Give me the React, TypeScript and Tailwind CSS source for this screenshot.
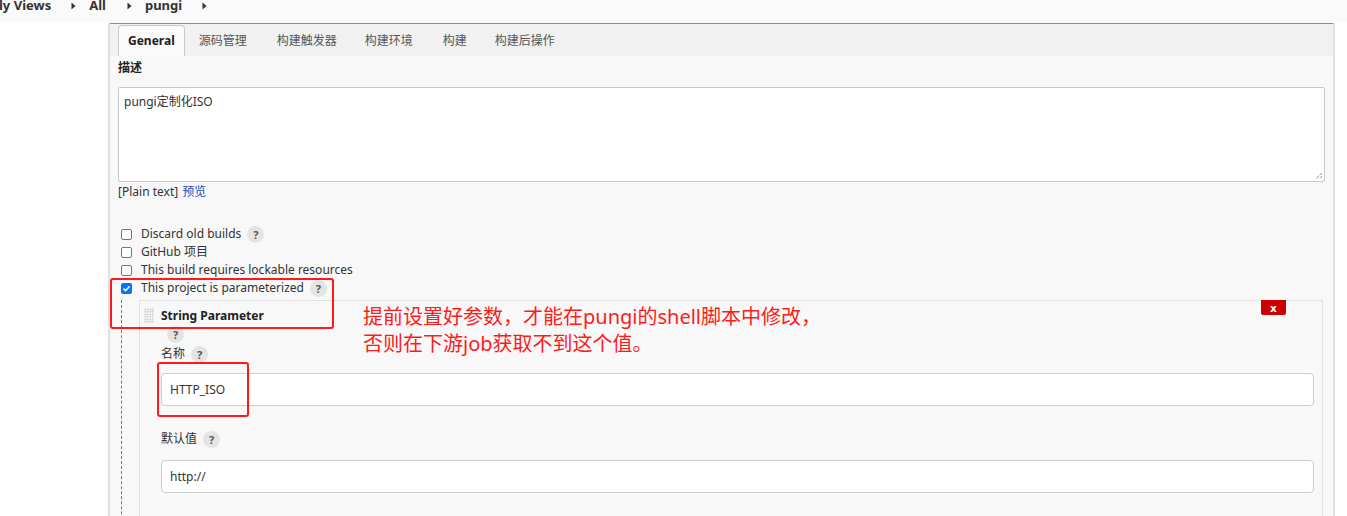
import React from "react";

const FONT = { fontFamily: '"Noto Sans", "Noto Sans CJK SC", sans-serif' } as const;

function Help({ className = "" }: { className?: string }) {
  return (
    <span
      className={
        "inline-flex items-center justify-center w-[17px] h-[17px] rounded-full bg-[#e4e4e4] text-[#555] text-[11px] font-bold leading-none " +
        className
      }
    >
      ?
    </span>
  );
}

function Box({ checked = false }: { checked?: boolean }) {
  if (checked) {
    return (
      <span className="inline-flex items-center justify-center w-[11px] h-[11px] rounded-[2px] bg-[#0075ff]">
        <svg width="9" height="9" viewBox="0 0 9 9">
          <path d="M1.5 4.6 L3.6 6.7 L7.6 2.2" stroke="white" strokeWidth="1.6" fill="none" />
        </svg>
      </span>
    );
  }
  return <span className="inline-block w-[11px] h-[11px] rounded-[2px] border border-[#767676] bg-white" />;
}

function Arrow() {
  return (
    <svg width="5" height="8" viewBox="0 0 5 8">
      <path d="M0.5 0.5 L4.5 4 L0.5 7.5 Z" fill="#333" />
    </svg>
  );
}

function Row({ checked = false, label, help = false }: { checked?: boolean; label: string; help?: boolean }) {
  return (
    <div className="flex items-center h-[18px]">
      <span className="w-[23px] pl-[3px] flex items-center">
        <Box checked={checked} />
      </span>
      <span className="text-[12px] text-[#333]">{label}</span>
      {help && <Help className="ml-[6px]" />}
    </div>
  );
}

export default function App() {
  return (
    <div className="w-[1347px] h-[516px] bg-white relative overflow-hidden" style={FONT}>
      {/* breadcrumb */}
      <div className="h-[23px] bg-[#fafafa] flex items-start">
        <div className="flex items-center -mt-[3px] h-[18px] text-[13px] font-bold text-[#333]">
          <span className="-ml-[1px]">ly Views</span>
          <span className="ml-[20px]"><Arrow /></span>
          <span className="ml-[13px]">All</span>
          <span className="ml-[21px]"><Arrow /></span>
          <span className="ml-[13px]">pungi</span>
          <span className="ml-[20px]"><Arrow /></span>
        </div>
      </div>

      <div className="flex">
        <div className="w-[108px] shrink-0" />
        <div className="w-[1227px] h-[493px] border-l-2 border-r-2 border-[#dde1e6] bg-[#f8f8f8]">
          {/* tab bar */}
          <div className="h-[33px] bg-[#f1f1f1] border-t border-[#8c8c8c] flex items-end pl-[8px]">
            <div className="h-[31px] px-[9px] flex items-center bg-[#fbfbfb] border border-b-0 border-[#c9c9c9] rounded-t-[4px] text-[12px] font-bold text-[#222]">
              General
            </div>
            <div className="h-[31px] flex items-center text-[12px] text-[#555]">
              <span className="ml-[14px]">源码管理</span>
              <span className="ml-[30px]">构建触发器</span>
              <span className="ml-[28px]">构建环境</span>
              <span className="ml-[30px]">构建</span>
              <span className="ml-[28px]">构建后操作</span>
            </div>
          </div>

          <div className="px-[8px]">
            <div className="h-[21px] mt-[1px] flex items-center text-[12px] font-bold text-[#222]">描述</div>
            <div className="mt-[9px] h-[95px] bg-white border border-[#c3c9cf] rounded-[2px] relative">
              <div className="pl-[5px] pt-[5px] text-[12px] text-[#333]">pungi定制化ISO</div>
              <svg className="absolute right-[1px] bottom-[1px]" width="9" height="9" viewBox="0 0 9 9">
                <path d="M8 2 L2 8 M8 5 L5 8" stroke="#555" strokeWidth="1" strokeDasharray="1 1" />
              </svg>
            </div>
            <div className="h-[18px] mt-[1px] flex items-center text-[12px]">
              <span className="text-[#333]">[Plain text]</span>
              <span className="ml-[4px] text-[#1550b8]">预览</span>
            </div>

            <div className="mt-[24px]">
              <Row label="Discard old builds" help />
              <Row label="GitHub 项目" />
              <Row label="This build requires lockable resources" />
              <Row checked label="This project is parameterized" help />
            </div>

            {/* nested parameter area */}
            <div className="ml-[3px] mr-[2px] border-l border-dashed border-[#777] h-[300px]">
              <div className="ml-[17px] mt-[3px] h-[300px] border border-[#e1e1e1] bg-[#f8f8f8] relative">
                <div className="absolute right-[36px] -top-[1px] w-[25px] h-[15px] bg-[#cc0000] rounded-b-[2px] flex items-center justify-center text-white text-[11px] font-bold leading-none">
                  x
                </div>
                <div className="flex items-center h-[26px] pl-[4px] pt-[3px]">
                  <span
                    className="w-[10px] h-[15px]"
                    style={{
                      backgroundImage: "radial-gradient(circle, #c9c9c9 0.8px, transparent 0.9px)",
                      backgroundSize: "2.5px 2.5px",
                    }}
                  />
                  <span className="ml-[7px] text-[12px] font-bold text-[#222]">String Parameter</span>
                </div>
                <div className="pl-[27px] h-[15px] flex items-center">
                  <Help />
                </div>
                <div className="pl-[21px] h-[22px] mt-[1px] flex items-center text-[12px] text-[#333]">
                  名称
                  <Help className="ml-[6px]" />
                </div>
                <div className="ml-[21px] mr-[8px] mt-[8px] h-[33px] bg-white border border-[#c8ced4] rounded-[4px] flex items-center pl-[8px] text-[12px] text-[#333]">
                  HTTP_ISO
                </div>
                <div className="pl-[21px] h-[22px] mt-[22px] flex items-center text-[12px] text-[#333]">
                  默认值
                  <Help className="ml-[6px]" />
                </div>
                <div className="ml-[21px] mr-[8px] mt-[10px] h-[33px] bg-white border border-[#c8ced4] rounded-[4px] flex items-center pl-[8px] text-[12px] text-[#333]">
                  http://
                </div>
              </div>
            </div>
          </div>
        </div>
      </div>

      {/* annotations */}
      <div className="absolute left-[110px] top-[278px] w-[224px] h-[51px] border-2 border-[#ff1a1a] rounded-[3px]" />
      <div className="absolute left-[157px] top-[362px] w-[92px] h-[55px] border-2 border-[#ff1a1a] rounded-[3px]" />
      <div className="absolute left-[363px] top-[303px] text-[20px] leading-[27px] text-[#ff1a1a]">
        <div>提前设置好参数，才能在pungi的shell脚本中修改，</div>
        <div>否则在下游job获取不到这个值。</div>
      </div>
    </div>
  );
}
